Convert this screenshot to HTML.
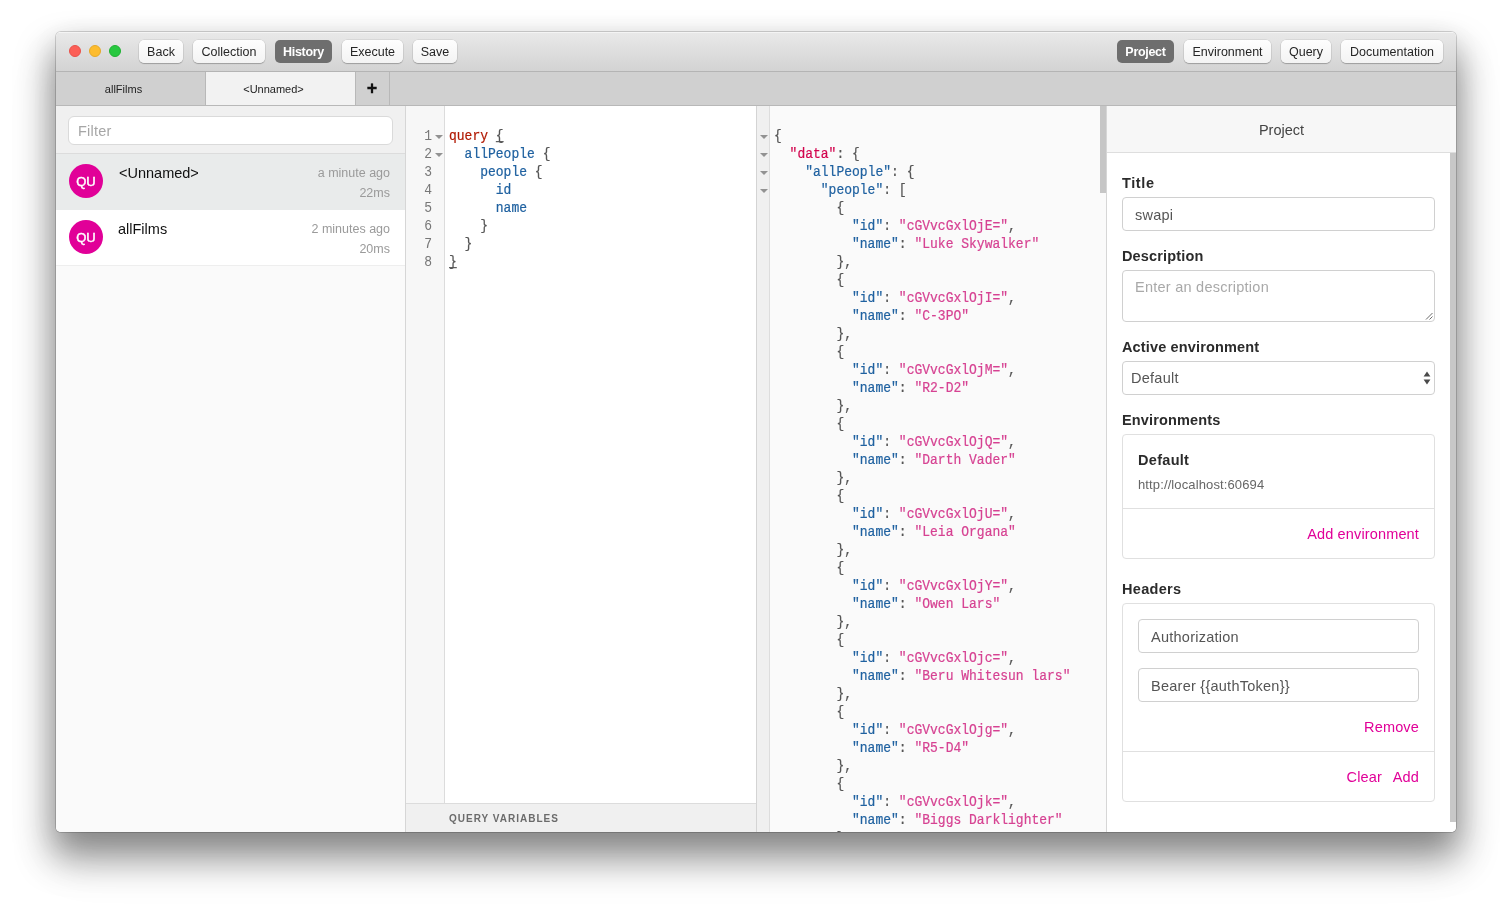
<!DOCTYPE html>
<html>
<head>
<meta charset="utf-8">
<title>GraphQL IDE</title>
<style>
*{box-sizing:border-box;margin:0;padding:0}
html,body{width:1512px;height:912px;overflow:hidden;background:#fff}
body{font-family:"Liberation Sans",sans-serif;font-size:13px;color:#333;position:relative}
.abs{position:absolute}
#shadow{position:absolute;left:56px;top:32px;width:1400px;height:800px;border-radius:5px;
  box-shadow:0 22px 36px 4px rgba(0,0,0,.40),0 0 0 1px rgba(0,0,0,.16),0 8px 26px 2px rgba(0,0,0,.065),0 28px 54px 0 rgba(0,0,0,.08)}
#win{position:absolute;left:56px;top:32px;width:1400px;height:800px;border-radius:5px;overflow:hidden;background:#fafafa}
/* title bar */
#titlebar{position:absolute;left:0;top:0;width:1400px;height:40px;background:linear-gradient(#e9e9e9,#d3d3d3);border-bottom:1px solid #b4b4b4;box-shadow:inset 0 1px 0 #f4f4f4}
.tl{position:absolute;top:13px;width:12px;height:12px;border-radius:50%}
.btn{position:absolute;top:8px;height:23px;border-radius:5px;background:linear-gradient(#fefefe,#f3f3f3);box-shadow:0 0 0 .5px rgba(0,0,0,.12),0 1px 1px rgba(0,0,0,.22);font-size:12.5px;line-height:25px;text-align:center;color:#262626;white-space:nowrap}
.btn.on{background:#6e6e6e;color:#fff;font-weight:bold;box-shadow:none;letter-spacing:-.3px}
/* tab bar */
#tabbar{position:absolute;left:0;top:40px;width:1400px;height:34px;background:#d0d0d0;border-bottom:1px solid #b8b8b8}
.tab{position:absolute;top:0;height:33px;font-size:11px;line-height:35px;text-align:center;color:#222;padding-right:14px}
/* sidebar */
#side{position:absolute;left:0;top:74px;width:350px;height:726px;background:#fafafa;border-right:1px solid #d6d6d6}
#filterbox{position:absolute;left:0;top:0;width:349px;height:48px;background:#f0f0f0;border-bottom:1px solid #dcdcdc}
#filter{position:absolute;left:12px;top:10px;width:325px;height:29px;border:1px solid #dadada;border-radius:6px;background:#fff;font-size:14.5px;letter-spacing:.2px;line-height:29px;padding-left:9px;color:#a6a6a6}
.item{position:absolute;left:0;width:349px;height:56px;border-bottom:1px solid #eee;background:#fff}
.item.sel{background:#e9ebeb;border-bottom-color:#e9ebeb}
.av{position:absolute;left:13px;top:10px;width:34px;height:34px;border-radius:50%;background:#e10098;color:#fff;font-size:13px;-webkit-text-stroke:.45px #fff;line-height:35px;text-align:center}
.nm{position:absolute;left:62px;top:10px;font-size:14.5px;line-height:18px;color:#111}
.tm{position:absolute;right:15px;font-size:12.5px;line-height:16px;color:#9a9a9a;white-space:nowrap}
/* editors */
#titlebar,#tabbar,#side,#panel,#qvars,.mono{will-change:transform}
.mono{-webkit-text-stroke:.2px;font-family:"Liberation Mono",monospace;font-size:13px;line-height:18px;white-space:pre}
#qgut{position:absolute;left:350px;top:74px;width:39px;height:697px;background:#f7f7f7;border-right:1px solid #dcdcdc}
#qed{position:absolute;left:389px;top:74px;width:311px;height:697px;background:#fff}
#qvars{position:absolute;left:350px;top:771px;width:350px;height:29px;background:#f0f0f0;border-top:1px solid #dcdcdc;font-size:10px;font-weight:bold;letter-spacing:1px;color:#6b6b6b;line-height:30px;padding-left:43px}
#rsep{position:absolute;left:700px;top:74px;width:1px;height:726px;background:#d4d4d4}
#rgut{position:absolute;left:701px;top:74px;width:13px;height:726px;background:#f0f0f0;border-right:1px solid #dddddd}
#res{position:absolute;left:714px;top:74px;width:336px;height:726px;background:#fafafa;overflow:hidden}
#rscroll{position:absolute;left:1044px;top:74px;width:6px;height:87px;background:#c6c6c6}
.l{height:18px;transform:scaleY(1.15);transform-origin:0 12.5px}
.mb{text-decoration:underline;text-decoration-skip-ink:none}
.ln{position:absolute;right:12px;height:18px;transform:scaleY(1.15);transform-origin:0 12.5px;-webkit-text-stroke:0;color:#777;text-align:right}
.kw{color:#B11A04}.pr{color:#1F61A0}.pu{color:#555}.st{color:#D64292}.df{color:#D2054E}
.fold{position:absolute;width:0;height:0;border-left:4px solid transparent;border-right:4px solid transparent;border-top:4px solid #929292}
/* right panel */
#panel{position:absolute;left:1050px;top:74px;width:350px;height:726px;background:#fff;border-left:1px solid #d6d6d6}
#phead{position:absolute;left:0;top:0;width:349px;height:47px;background:#f7f7f7;border-bottom:1px solid #dedede;font-size:14.5px;line-height:49px;text-align:center;color:#444}
#pscroll{position:absolute;left:343px;top:47px;width:6px;height:669px;background:#c8c8c8}
.lbl{position:absolute;left:15px;font-size:14.5px;letter-spacing:.15px;font-weight:bold;line-height:18px;color:#2b2b2b;white-space:nowrap}
.inp{position:absolute;border:1px solid #d0d0d0;border-radius:4px;background:#fff;font-size:14.5px;letter-spacing:.25px;color:#555;white-space:nowrap}
.card{position:absolute;left:15px;width:313px;border:1px solid #e0e0e0;border-radius:4px;background:#fff}
.pink{color:#e10098;font-size:14.5px;letter-spacing:.15px;position:absolute;white-space:nowrap;line-height:18px}
</style>
</head>
<body>
<div id="shadow"></div>
<div id="win">
  <div id="titlebar">
    <div class="tl" style="left:13px;background:#fc5f57;border:1px solid #e9514a"></div>
    <div class="tl" style="left:33px;background:#fdbc2e;border:1px solid #e6a928"></div>
    <div class="tl" style="left:53px;background:#28c840;border:1px solid #1fb232"></div>
    <div class="btn" style="left:83px;width:44px">Back</div>
    <div class="btn" style="left:137px;width:72px">Collection</div>
    <div class="btn on" style="left:219px;width:57px">History</div>
    <div class="btn" style="left:286px;width:61px">Execute</div>
    <div class="btn" style="left:357px;width:44px">Save</div>
    <div class="btn on" style="left:1061px;width:57px">Project</div>
    <div class="btn" style="left:1128px;width:87px">Environment</div>
    <div class="btn" style="left:1225px;width:50px">Query</div>
    <div class="btn" style="left:1285px;width:102px">Documentation</div>
  </div>
  <div id="tabbar">
    <div class="tab" style="left:0;width:150px;border-right:1px solid #b8b8b8">allFilms</div>
    <div class="tab" style="left:150px;width:150px;background:#f2f2f2;border-right:1px solid #b8b8b8">&lt;Unnamed&gt;</div>
    <div class="tab" style="left:300px;width:34px;border-right:1px solid #b8b8b8;font-size:18px;font-weight:bold;-webkit-text-stroke:.3px;color:#111;padding-right:1px;line-height:32px">+</div>
  </div>
  <div id="side">
    <div id="filterbox"><div id="filter">Filter</div></div>
    <div class="item sel" style="top:48px">
      <div class="av">QU</div><div class="nm" style="left:63px">&lt;Unnamed&gt;</div>
      <div class="tm" style="top:11px">a minute ago</div><div class="tm" style="top:31px">22ms</div>
    </div>
    <div class="item" style="top:104px">
      <div class="av">QU</div><div class="nm">allFilms</div>
      <div class="tm" style="top:11px">2 minutes ago</div><div class="tm" style="top:31px">20ms</div>
    </div>
  </div>
  <div id="qgut" class="mono"><div class="ln" style="top:21.5px">1</div><div class="ln" style="top:39.5px">2</div><div class="ln" style="top:57.5px">3</div><div class="ln" style="top:75.5px">4</div><div class="ln" style="top:93.5px">5</div><div class="ln" style="top:111.5px">6</div><div class="ln" style="top:129.5px">7</div><div class="ln" style="top:147.5px">8</div><div class="fold" style="left:29px;top:28.5px"></div><div class="fold" style="left:29px;top:46.5px"></div></div>
  <div id="qed" class="mono"><div class="abs" style="left:4px;top:21.5px"><div class="l"><span class="kw">query</span> <span class="pu mb">{</span></div><div class="l">  <span class="pr">allPeople</span> <span class="pu">{</span></div><div class="l">    <span class="pr">people</span> <span class="pu">{</span></div><div class="l">      <span class="pr">id</span></div><div class="l">      <span class="pr">name</span></div><div class="l">    <span class="pu">}</span></div><div class="l">  <span class="pu">}</span></div><div class="l"><span class="pu mb">}</span></div></div></div>
  <div id="qvars">QUERY VARIABLES</div>
  <div id="rsep"></div>
  <div id="rgut"><div class="fold" style="left:2.5px;top:28.5px"></div><div class="fold" style="left:2.5px;top:46.5px"></div><div class="fold" style="left:2.5px;top:64.5px"></div><div class="fold" style="left:2.5px;top:82.5px"></div></div>
  <div id="res" class="mono"><div class="abs" style="left:4px;top:21.5px"><div class="l"><span class="pu">{</span></div><div class="l">  <span class="df">"data"</span><span class="pu">: {</span></div><div class="l">    <span class="pr">"allPeople"</span><span class="pu">: {</span></div><div class="l">      <span class="pr">"people"</span><span class="pu">: [</span></div><div class="l">        <span class="pu">{</span></div><div class="l">          <span class="pr">"id"</span><span class="pu">: </span><span class="st">"cGVvcGxlOjE="</span><span class="pu">,</span></div><div class="l">          <span class="pr">"name"</span><span class="pu">: </span><span class="st">"Luke Skywalker"</span></div><div class="l">        <span class="pu">},</span></div><div class="l">        <span class="pu">{</span></div><div class="l">          <span class="pr">"id"</span><span class="pu">: </span><span class="st">"cGVvcGxlOjI="</span><span class="pu">,</span></div><div class="l">          <span class="pr">"name"</span><span class="pu">: </span><span class="st">"C-3PO"</span></div><div class="l">        <span class="pu">},</span></div><div class="l">        <span class="pu">{</span></div><div class="l">          <span class="pr">"id"</span><span class="pu">: </span><span class="st">"cGVvcGxlOjM="</span><span class="pu">,</span></div><div class="l">          <span class="pr">"name"</span><span class="pu">: </span><span class="st">"R2-D2"</span></div><div class="l">        <span class="pu">},</span></div><div class="l">        <span class="pu">{</span></div><div class="l">          <span class="pr">"id"</span><span class="pu">: </span><span class="st">"cGVvcGxlOjQ="</span><span class="pu">,</span></div><div class="l">          <span class="pr">"name"</span><span class="pu">: </span><span class="st">"Darth Vader"</span></div><div class="l">        <span class="pu">},</span></div><div class="l">        <span class="pu">{</span></div><div class="l">          <span class="pr">"id"</span><span class="pu">: </span><span class="st">"cGVvcGxlOjU="</span><span class="pu">,</span></div><div class="l">          <span class="pr">"name"</span><span class="pu">: </span><span class="st">"Leia Organa"</span></div><div class="l">        <span class="pu">},</span></div><div class="l">        <span class="pu">{</span></div><div class="l">          <span class="pr">"id"</span><span class="pu">: </span><span class="st">"cGVvcGxlOjY="</span><span class="pu">,</span></div><div class="l">          <span class="pr">"name"</span><span class="pu">: </span><span class="st">"Owen Lars"</span></div><div class="l">        <span class="pu">},</span></div><div class="l">        <span class="pu">{</span></div><div class="l">          <span class="pr">"id"</span><span class="pu">: </span><span class="st">"cGVvcGxlOjc="</span><span class="pu">,</span></div><div class="l">          <span class="pr">"name"</span><span class="pu">: </span><span class="st">"Beru Whitesun lars"</span></div><div class="l">        <span class="pu">},</span></div><div class="l">        <span class="pu">{</span></div><div class="l">          <span class="pr">"id"</span><span class="pu">: </span><span class="st">"cGVvcGxlOjg="</span><span class="pu">,</span></div><div class="l">          <span class="pr">"name"</span><span class="pu">: </span><span class="st">"R5-D4"</span></div><div class="l">        <span class="pu">},</span></div><div class="l">        <span class="pu">{</span></div><div class="l">          <span class="pr">"id"</span><span class="pu">: </span><span class="st">"cGVvcGxlOjk="</span><span class="pu">,</span></div><div class="l">          <span class="pr">"name"</span><span class="pu">: </span><span class="st">"Biggs Darklighter"</span></div><div class="l">        <span class="pu">},</span></div></div></div>
  <div id="rscroll"></div>
  <div id="panel">
    <div id="phead">Project</div>
    <div id="pscroll"></div>
    <div class="lbl" style="top:68px;letter-spacing:.6px">Title</div>
    <div class="inp" style="left:15px;top:91px;width:313px;height:34px;line-height:34px;padding-left:12px">swapi</div>
    <div class="lbl" style="top:141px">Description</div>
    <div class="inp" style="left:15px;top:164px;width:313px;height:52px;line-height:18px;padding:7px 0 0 12px;color:#a9a9a9">Enter an description
      <svg class="abs" style="right:1px;bottom:1px" width="8" height="8" viewBox="0 0 8 8"><path d="M7.5 1 L1 7.5 M7.5 4.5 L4.5 7.5" stroke="#5a5a5a" stroke-width=".9" fill="none"/></svg>
    </div>
    <div class="lbl" style="top:232px">Active environment</div>
    <div class="inp" style="left:15px;top:255px;width:313px;height:34px;line-height:32px;padding-left:8px">Default
      <svg class="abs" style="right:3px;top:9px" width="8" height="14" viewBox="0 0 8 14"><path d="M4 0.4 L7.4 5.6 H0.6 Z M4 13.6 L7.4 8.4 H0.6 Z" fill="#4a4a4a"/></svg>
    </div>
    <div class="lbl" style="top:305px">Environments</div>
    <div class="card" style="top:328px;height:125px">
      <div class="lbl" style="left:15px;top:16px;letter-spacing:.3px">Default</div>
      <div class="abs" style="left:15px;top:42px;font-size:13px;letter-spacing:.12px;line-height:16px;color:#666;white-space:nowrap">http://localhost:60694</div>
      <div class="abs" style="left:0;top:73px;width:311px;height:1px;background:#e0e0e0"></div>
      <div class="pink" style="right:15px;top:90px">Add environment</div>
    </div>
    <div class="lbl" style="top:474px;letter-spacing:.3px">Headers</div>
    <div class="card" style="top:497px;height:199px">
      <div class="inp" style="left:15px;top:15px;width:281px;height:34px;line-height:34px;padding-left:12px">Authorization</div>
      <div class="inp" style="left:15px;top:64px;width:281px;height:34px;line-height:34px;padding-left:12px">Bearer {{authToken}}</div>
      <div class="pink" style="right:15px;top:114px">Remove</div>
      <div class="abs" style="left:0;top:147px;width:311px;height:1px;background:#e0e0e0"></div>
      <div class="pink" style="right:52px;top:164px">Clear</div>
      <div class="pink" style="right:15px;top:164px">Add</div>
    </div>
  </div>
</div>
</body>
</html>
